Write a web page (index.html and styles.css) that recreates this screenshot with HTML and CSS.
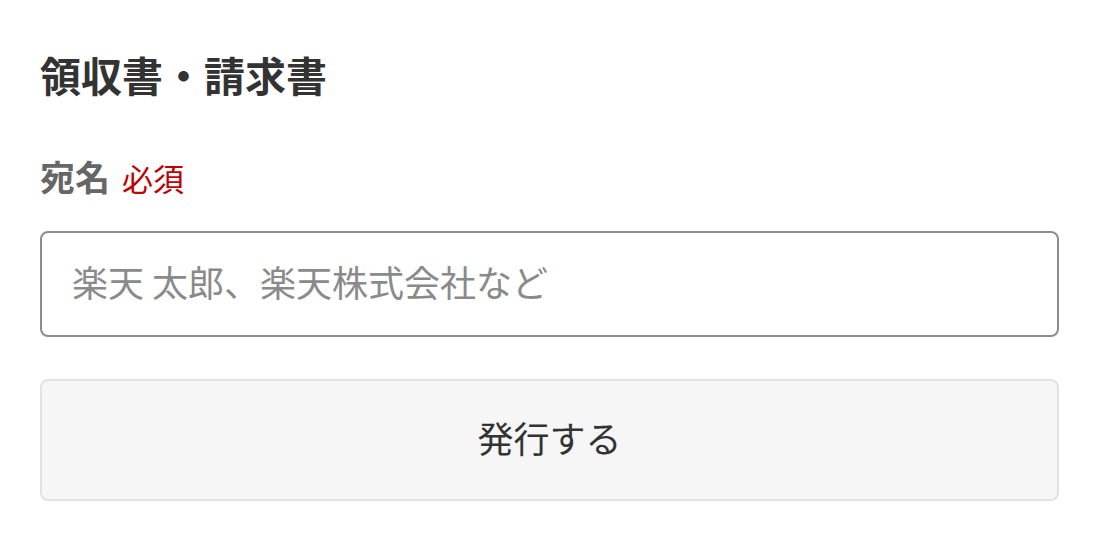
FILE: index.html
```html
<!DOCTYPE html>
<html lang="ja">
<head>
    <meta charset="UTF-8">
    <meta name="viewport" content="width=device-width, initial-scale=1.0">
    <title>領収書・請求書</title>
    <link rel="stylesheet" href="styles.css">
</head>
<body>
    <div class="container">
        <h1>領収書・請求書</h1>
        <form id="receiptForm">
            <label for="name">宛名 <span class="required">必須</span></label>
            <input type="text" id="name" placeholder="楽天 太郎、楽天株式会社など">
            <button type="submit">発行する</button>
        </form>
    </div>
</body>
</html>
```

FILE: styles.css
```css
body {
    font-family: "Noto Sans CJK JP", "Noto Sans", sans-serif;
    background-color: #ffffff;
    color: #333333;
    margin: 0;
    padding: 0;
}
.container {
    padding: 48px 41px 0 40px;
}
h1 {
    font-size: 41px;
    font-weight: bold;
    line-height: 52px;
    margin: 0 0 50px;
    color: #333;
}
label {
    display: block;
    font-size: 35px;
    font-weight: bold;
    line-height: 52px;
    color: #666;
    margin-bottom: 27px;
}
.required {
    font-size: 31px;
    font-weight: normal;
    color: #bf0000;
    margin-left: 4px;
}
input, button {
    display: block;
    width: 100%;
    box-sizing: border-box;
    font-family: inherit;
    border-radius: 8px;
}
input {
    height: 106px;
    padding: 0 30px 6px;
    font-size: 36px;
    border: 2px solid #8c8c8c;
    color: #333;
    margin-bottom: 42px;
}
input::placeholder {
    color: #8a8a8a;
}
button {
    height: 122px;
    padding: 0 0 6px;
    font-size: 36px;
    background-color: #f6f6f6;
    border: 2px solid #e2e2e2;
    color: #333;
    cursor: pointer;
}
```
